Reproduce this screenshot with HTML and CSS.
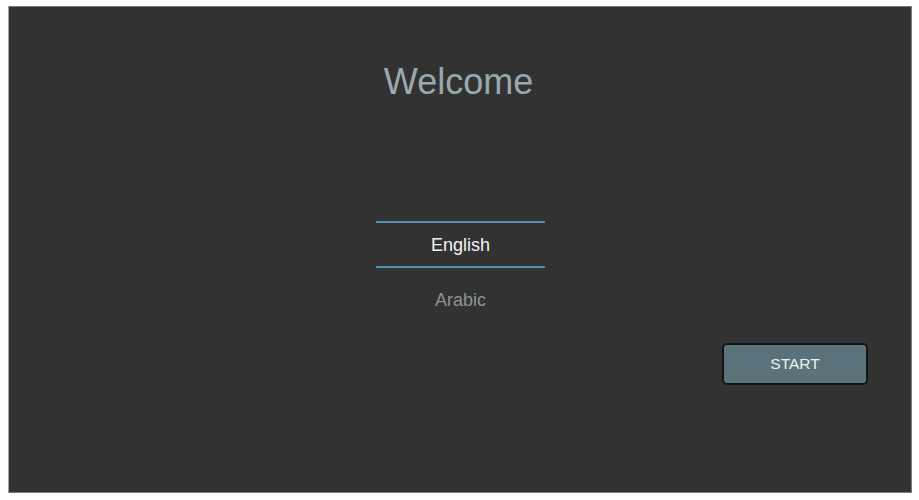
FILE: index.html
```html
<!DOCTYPE html>
<html>
<head>
<meta charset="utf-8">
<link rel="stylesheet" href="styles.css">
</head>
<body>
<main class="panel">
  <h1 class="title">Welcome</h1>
  <ul class="langs">
    <li class="lang selected">English</li>
    <li class="lang">Arabic</li>
  </ul>
  <div class="actions">
    <button class="start">START</button>
  </div>
</main>
</body>
</html>
```

FILE: styles.css
```css
html, body {
  margin: 0;
  padding: 0;
  background: #ffffff;
}
body {
  font-family: "Liberation Sans", Arial, sans-serif;
  padding: 6px 7px 7px 8px;
  height: 500px;
  box-sizing: border-box;
}
.panel {
  box-sizing: border-box;
  height: 487px;
  background: #323232;
  border: 1px solid #7c7c7c;
  border-left-color: #a4a4a4;
  display: flex;
  flex-direction: column;
  padding-top: 55px;
}
.title {
  margin: 0;
  text-align: center;
  font-weight: normal;
  font-size: 36px;
  line-height: 40px;
  color: #9aa9ae;
  padding-right: 3px;
}
.langs {
  list-style: none;
  margin: 119px auto 0;
  padding: 0;
  width: 169px;
  display: flex;
  flex-direction: column;
  gap: 8px;
}
.lang {
  height: 42px;
  border-top: 2px solid transparent;
  border-bottom: 2px solid transparent;
  display: flex;
  align-items: center;
  justify-content: center;
  font-size: 18px;
  color: #8b9496;
  padding-top: 1px;
  box-sizing: content-box;
  padding-left: 1px;
}
.lang.selected {
  border-color: #4e93ae;
  color: #f2f2f2;
}
.actions {
  display: flex;
  justify-content: flex-end;
  margin-top: 20px;
  padding-right: 43px;
}
.start {
  width: 146px;
  height: 42px;
  box-sizing: border-box;
  border: 2px solid #141414;
  border-radius: 5px;
  background: #5a737a;
  color: #f0f0f0;
  font-family: "Liberation Sans", Arial, sans-serif;
  font-size: 15.5px;
  padding: 0;
}
```
